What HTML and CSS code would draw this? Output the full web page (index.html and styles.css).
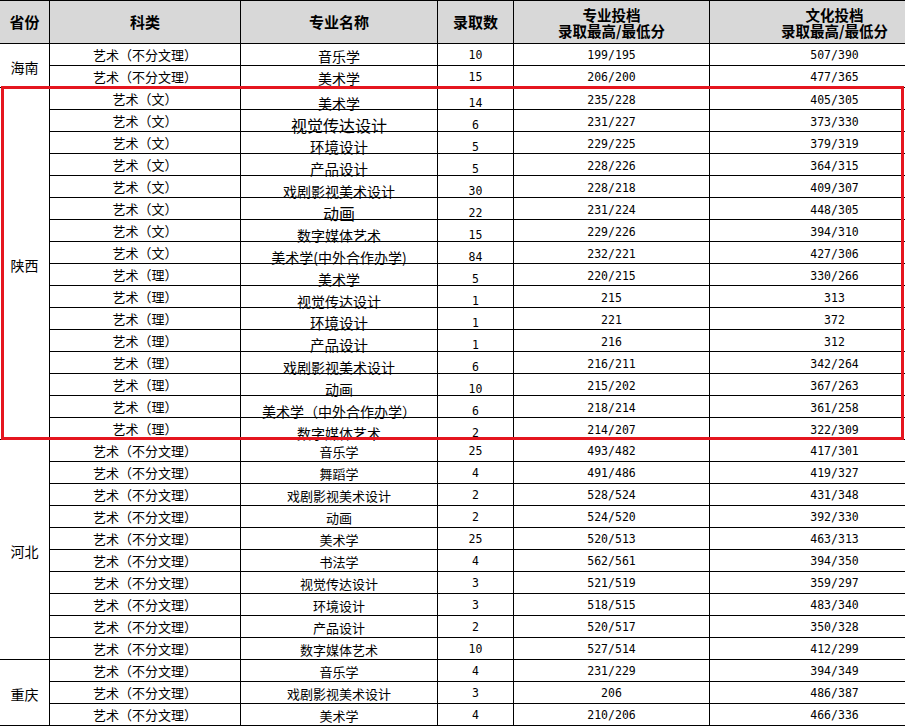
FILE: index.html
```html
<!DOCTYPE html>
<html lang="zh">
<head>
<meta charset="utf-8">
<title>录取分数</title>
<link rel="stylesheet" href="styles.css">
</head>
<body>
<div class="page">
  <div class="grid">
    <div class="cell hd">省份</div>
    <div class="cell hd">科类</div>
    <div class="cell hd">专业名称</div>
    <div class="cell hd">录取数</div>
    <div class="cell hd two"><p class="ln">专业投档<br>录取最高/最低分</p></div>
    <div class="cell hd two last"><p class="ln">文化投档<br>录取最高/最低分</p></div>

    <div class="cell prov s2">海南</div>
    <div class="cell kl">艺术（不分文理）</div><div class="cell zy hn">音乐学</div><div class="cell num">10</div><div class="cell sc">199/195</div><div class="cell sc last">507/390</div>
    <div class="cell kl">艺术（不分文理）</div><div class="cell zy hn">美术学</div><div class="cell num">15</div><div class="cell sc">206/200</div><div class="cell sc last">477/365</div>

    <div class="cell prov s16">陕西</div>
    <div class="cell kl">艺术（文）</div><div class="cell zy sx">美术学</div><div class="cell num sx">14</div><div class="cell sc sx">235/228</div><div class="cell sc sx last">405/305</div>
    <div class="cell kl">艺术（文）</div><div class="cell zy sx big">视觉传达设计</div><div class="cell num sx">6</div><div class="cell sc sx">231/227</div><div class="cell sc sx last">373/330</div>
    <div class="cell kl">艺术（文）</div><div class="cell zy sx mid">环境设计</div><div class="cell num sx">5</div><div class="cell sc sx">229/225</div><div class="cell sc sx last">379/319</div>
    <div class="cell kl">艺术（文）</div><div class="cell zy sx mid">产品设计</div><div class="cell num sx">5</div><div class="cell sc sx">228/226</div><div class="cell sc sx last">364/315</div>
    <div class="cell kl">艺术（文）</div><div class="cell zy sx">戏剧影视美术设计</div><div class="cell num sx">30</div><div class="cell sc sx">228/218</div><div class="cell sc sx last">409/307</div>
    <div class="cell kl">艺术（文）</div><div class="cell zy sx big">动画</div><div class="cell num sx">22</div><div class="cell sc sx">231/224</div><div class="cell sc sx last">448/305</div>
    <div class="cell kl">艺术（文）</div><div class="cell zy sx">数字媒体艺术</div><div class="cell num sx">15</div><div class="cell sc sx">229/226</div><div class="cell sc sx last">394/310</div>
    <div class="cell kl">艺术（文）</div><div class="cell zy sx">美术学(中外合作办学)</div><div class="cell num sx">84</div><div class="cell sc sx">232/221</div><div class="cell sc sx last">427/306</div>
    <div class="cell kl">艺术（理）</div><div class="cell zy sx">美术学</div><div class="cell num sx">5</div><div class="cell sc sx">220/215</div><div class="cell sc sx last">330/266</div>
    <div class="cell kl">艺术（理）</div><div class="cell zy sx">视觉传达设计</div><div class="cell num sx">1</div><div class="cell sc sx">215</div><div class="cell sc sx last">313</div>
    <div class="cell kl">艺术（理）</div><div class="cell zy sx mid">环境设计</div><div class="cell num sx">1</div><div class="cell sc sx">221</div><div class="cell sc sx last">372</div>
    <div class="cell kl">艺术（理）</div><div class="cell zy sx mid">产品设计</div><div class="cell num sx">1</div><div class="cell sc sx">216</div><div class="cell sc sx last">312</div>
    <div class="cell kl">艺术（理）</div><div class="cell zy sx">戏剧影视美术设计</div><div class="cell num sx">6</div><div class="cell sc sx">216/211</div><div class="cell sc sx last">342/264</div>
    <div class="cell kl">艺术（理）</div><div class="cell zy sx">动画</div><div class="cell num sx">10</div><div class="cell sc sx">215/202</div><div class="cell sc sx last">367/263</div>
    <div class="cell kl">艺术（理）</div><div class="cell zy sx">美术学（中外合作办学）</div><div class="cell num sx">6</div><div class="cell sc sx">218/214</div><div class="cell sc sx last">361/258</div>
    <div class="cell kl">艺术（理）</div><div class="cell zy sx">数字媒体艺术</div><div class="cell num sx">2</div><div class="cell sc sx">214/207</div><div class="cell sc sx last">322/309</div>

    <div class="cell prov s10">河北</div>
    <div class="cell kl">艺术（不分文理）</div><div class="cell zy">音乐学</div><div class="cell num">25</div><div class="cell sc">493/482</div><div class="cell sc last">417/301</div>
    <div class="cell kl">艺术（不分文理）</div><div class="cell zy">舞蹈学</div><div class="cell num">4</div><div class="cell sc">491/486</div><div class="cell sc last">419/327</div>
    <div class="cell kl">艺术（不分文理）</div><div class="cell zy">戏剧影视美术设计</div><div class="cell num">2</div><div class="cell sc">528/524</div><div class="cell sc last">431/348</div>
    <div class="cell kl">艺术（不分文理）</div><div class="cell zy">动画</div><div class="cell num">2</div><div class="cell sc">524/520</div><div class="cell sc last">392/330</div>
    <div class="cell kl">艺术（不分文理）</div><div class="cell zy">美术学</div><div class="cell num">25</div><div class="cell sc">520/513</div><div class="cell sc last">463/313</div>
    <div class="cell kl">艺术（不分文理）</div><div class="cell zy">书法学</div><div class="cell num">4</div><div class="cell sc">562/561</div><div class="cell sc last">394/350</div>
    <div class="cell kl">艺术（不分文理）</div><div class="cell zy">视觉传达设计</div><div class="cell num">3</div><div class="cell sc">521/519</div><div class="cell sc last">359/297</div>
    <div class="cell kl">艺术（不分文理）</div><div class="cell zy">环境设计</div><div class="cell num">3</div><div class="cell sc">518/515</div><div class="cell sc last">483/340</div>
    <div class="cell kl">艺术（不分文理）</div><div class="cell zy">产品设计</div><div class="cell num">2</div><div class="cell sc">520/517</div><div class="cell sc last">350/328</div>
    <div class="cell kl">艺术（不分文理）</div><div class="cell zy">数字媒体艺术</div><div class="cell num">10</div><div class="cell sc">527/514</div><div class="cell sc last">412/299</div>

    <div class="cell prov s3">重庆</div>
    <div class="cell kl">艺术（不分文理）</div><div class="cell zy">音乐学</div><div class="cell num">4</div><div class="cell sc">231/229</div><div class="cell sc last">394/349</div>
    <div class="cell kl">艺术（不分文理）</div><div class="cell zy">戏剧影视美术设计</div><div class="cell num">3</div><div class="cell sc">206</div><div class="cell sc last">486/387</div>
    <div class="cell kl">艺术（不分文理）</div><div class="cell zy">美术学</div><div class="cell num">4</div><div class="cell sc">210/206</div><div class="cell sc last">466/336</div>
  </div>
  <div class="highlight"></div>
</div>
</body>
</html>
```

FILE: styles.css
```css
html, body {
  margin: 0;
  padding: 0;
  background: #ffffff;
  overflow: hidden;
}
body {
  width: 905px;
  height: 726px;
  font-family: "Noto Sans CJK SC", "Noto Sans", sans-serif;
  color: #000;
}
.page {
  position: relative;
  width: 905px;
  height: 726px;
  overflow: hidden;
}
.grid {
  display: grid;
  grid-template-columns: 50px 191px 197px 76px 196px 250px;
  grid-template-rows: 44px repeat(31, 22px);
  width: 960px;
}
.cell {
  box-sizing: border-box;
  border-right: 1px solid #000;
  border-bottom: 1px solid #000;
  display: flex;
  align-items: center;
  justify-content: center;
  white-space: nowrap;
  overflow: hidden;
  font-size: 13px;
  line-height: 14px;
}
.hd {
  background: #d8d8d8;
  border-top: 1px solid #000;
  font-weight: 700;
  font-size: 15px;
  line-height: 16px;
}
.two {
  padding-top: 1px;
}
.ln {
  margin: 0;
  text-align: center;
  line-height: 16px;
  font-size: 14.5px;
}
.prov {
  font-size: 14px;
  padding-top: 2px;
}
.s2 { grid-row: span 2; }
.s3 { grid-row: span 3; }
.s10 { grid-row: span 10; }
.s16 { grid-row: span 16; }
.kl {
  font-size: 13px;
}
.zy {
  font-size: 13px;
  padding-top: 2px;
}
.zy.hn {
  font-size: 14px;
  padding-top: 3px;
}
.zy.sx {
  font-size: 14px;
  align-items: flex-end;
  padding-top: 0;
  line-height: 12px;
  overflow: visible;
}
.zy.sx.big {
  font-size: 16px;
}
.zy.sx.mid {
  font-size: 14.5px;
}
.num, .sc {
  font-family: "DejaVu Sans Mono", "Liberation Mono", monospace;
  font-size: 11.5px;
}
.num.sx {
  padding-top: 8px;
}
.sc.sx {
  padding-top: 3px;
}
.highlight {
  position: absolute;
  left: 1px;
  top: 86px;
  width: 903px;
  height: 354px;
  box-sizing: border-box;
  border: 3px solid #e5161f;
  pointer-events: none;
}
```
